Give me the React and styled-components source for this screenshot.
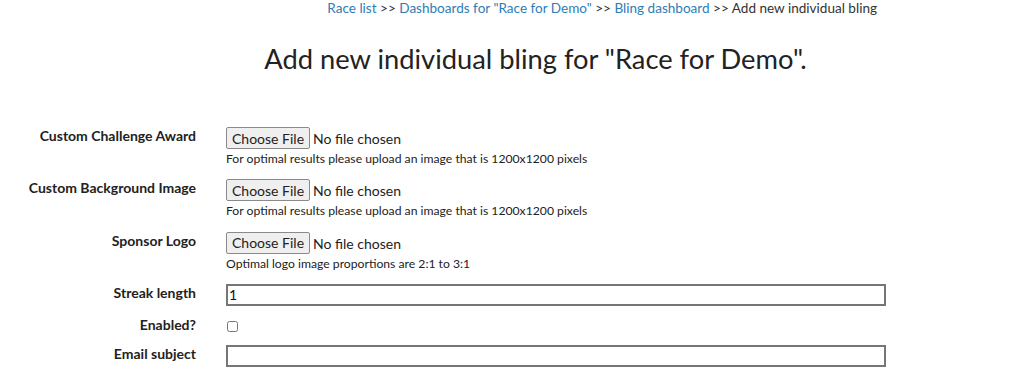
import React from "react";
import styled, { createGlobalStyle } from "styled-components";

const GlobalStyle = createGlobalStyle`
  * {
    box-sizing: border-box;
  }
  body {
    margin: 0;
    background: #fff;
    color: #222;
    font-family: Lato, "Liberation Sans", sans-serif;
    font-size: 14px;
  }
  a {
    color: #2f7db5;
    text-decoration: none;
  }
`;

const Page = styled.div`
  width: 1021px;
`;

const Breadcrumb = styled.nav`
  width: 877px;
  text-align: right;
  font-size: 13.55px;
  line-height: 16px;
  color: #333;
`;

const Title = styled.h1`
  margin: 25px 0 0 0;
  padding-left: 50px;
  text-align: center;
  font-weight: 400;
  font-size: 27.3px;
  line-height: 36px;
  color: #222;
`;

const Form = styled.form`
  display: grid;
  grid-template-columns: 196px 660px;
  column-gap: 30px;
  row-gap: 10px;
  margin-top: 50px;
`;

const Label = styled.label`
  text-align: right;
  font-weight: 700;
  font-size: 14px;
  line-height: 18px;
  color: #222;
`;

const Field = styled.div`
  display: flex;
  flex-direction: column;
  align-items: flex-start;
  min-height: ${(p) => p.$h || 22}px;
`;

const FileInput = styled.input`
  font-family: inherit;
  font-size: 14px;
  color: #222;
  height: 22px;
  &::file-selector-button {
    font-family: inherit;
    font-size: 14px;
    height: 22px;
    padding: 0 5px;
    margin-right: 3px;
    border: 1px solid #8a8a8a;
    border-radius: 2px;
    background: #efefef;
    color: #222;
  }
`;

const Help = styled.small`
  font-size: 12.2px;
  line-height: 16px;
  margin-top: 2px;
  color: #222;
`;

const TextInput = styled.input`
  width: 660px;
  height: 22px;
  border: 1px solid #767676;
  outline: 1px solid #767676;
  outline-offset: -2px;
  padding: 1px 2px;
  font-family: inherit;
  font-size: 14px;
  color: #111;
`;

const Check = styled.input`
  margin: 5px 0 0 1px;
  width: 11px;
  height: 11px;
`;

const rows = [
  {
    label: "Custom Challenge Award",
    help: "For optimal results please upload an image that is 1200x1200 pixels",
  },
  {
    label: "Custom Background Image",
    help: "For optimal results please upload an image that is 1200x1200 pixels",
  },
  {
    label: "Sponsor Logo",
    help: "Optimal logo image proportions are 2:1 to 3:1",
  },
];

export default function App() {
  return (
    <Page>
      <GlobalStyle />
      <Breadcrumb>
        <a href="#">Race list</a> &gt;&gt;{" "}
        <a href="#">Dashboards for "Race for Demo"</a> &gt;&gt;{" "}
        <a href="#">Bling dashboard</a> &gt;&gt; Add new individual bling
      </Breadcrumb>
      <Title>Add new individual bling for "Race for Demo".</Title>
      <Form>
        {rows.map((r) => (
          <React.Fragment key={r.label}>
            <Label>{r.label}</Label>
            <Field $h={42.3}>
              <FileInput type="file" />
              <Help>{r.help}</Help>
            </Field>
          </React.Fragment>
        ))}
        <Label>Streak length</Label>
        <Field>
          <TextInput type="text" defaultValue="1" />
        </Field>
        <Label>Enabled?</Label>
        <Field $h={19}>
          <Check type="checkbox" />
        </Field>
        <Label>Email subject</Label>
        <Field>
          <TextInput type="text" />
        </Field>
      </Form>
    </Page>
  );
}
